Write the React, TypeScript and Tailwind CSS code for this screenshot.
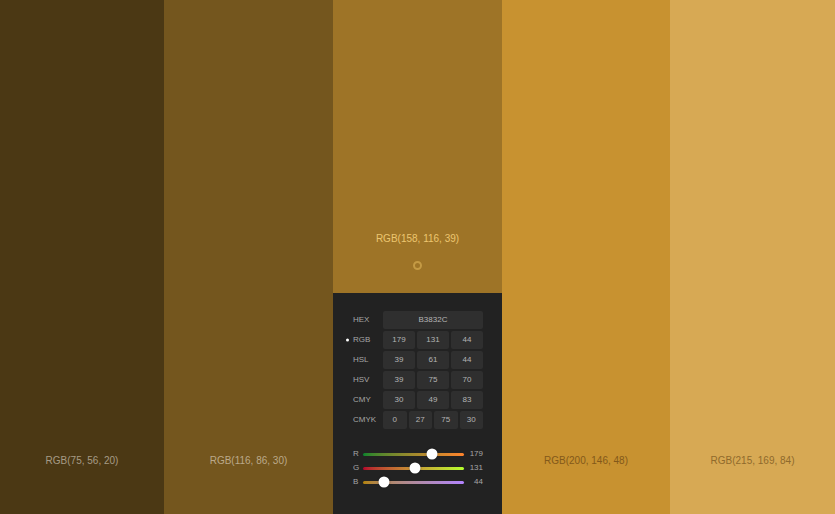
import React from "react";

const font = { fontFamily: '"Liberation Sans", Arial, sans-serif' };

function Swatch({ bg, label, text }: { bg: string; label: string; text: string }) {
  return (
    <div className={`flex h-full flex-col items-center justify-end pb-[47px] ${bg}`}>
      <span className={`text-[10px] leading-[12px] ${text}`}>{label}</span>
    </div>
  );
}

function Cells({ values }: { values: string[] }) {
  const cols = values.length === 1 ? "grid-cols-1" : values.length === 4 ? "grid-cols-4" : "grid-cols-3";
  return (
    <div className={`grid w-[100px] gap-[2px] ${cols}`}>
      {values.map((v, i) => (
        <div
          key={i}
          className="flex h-[18px] items-center justify-center rounded-[2px] bg-[#2f2f2f] text-[8px] text-[#b4b4b4]"
        >
          {v}
        </div>
      ))}
    </div>
  );
}

const rows = [
  { name: "HEX", values: ["B3832C"] },
  { name: "RGB", values: ["179", "131", "44"], active: true },
  { name: "HSL", values: ["39", "61", "44"] },
  { name: "HSV", values: ["39", "75", "70"] },
  { name: "CMY", values: ["30", "49", "83"] },
  { name: "CMYK", values: ["0", "27", "75", "30"] },
];

const sliders = [
  { name: "R", value: 179, track: "bg-gradient-to-r from-[#00832c] to-[#ff832c]" },
  { name: "G", value: 131, track: "bg-gradient-to-r from-[#b3002c] to-[#b3ff2c]" },
  { name: "B", value: 44, track: "bg-gradient-to-r from-[#b38300] to-[#b383ff]" },
];

function Picker() {
  return (
    <div className="flex h-[221px] flex-col bg-[#222222] pl-[20px] pr-[19px] pt-[18px]">
      <div className="flex flex-col gap-[2px]">
        {rows.map((r) => (
          <div key={r.name} className="flex items-center">
            <div className="relative w-[30px] text-[8px] text-[#a6a6a6]">
              {r.active && (
                <span className="absolute left-[-7px] top-1/2 h-[3px] w-[3px] -translate-y-1/2 rounded-full bg-white" />
              )}
              {r.name}
            </div>
            <Cells values={r.values} />
          </div>
        ))}
      </div>
      <div className="mt-[18px] flex flex-col">
        {sliders.map((s) => (
          <div key={s.name} className="flex h-[14px] items-center">
            <span className="w-[10px] text-[8px] text-[#a6a6a6]">{s.name}</span>
            <div className={`relative h-[3px] w-[101px] rounded-full ${s.track}`}>
              <span
                className="absolute top-1/2 h-[11px] w-[11px] -translate-x-1/2 -translate-y-1/2 rounded-full bg-white shadow-[0_0_2px_rgba(0,0,0,0.5)]"
                style={{ left: `${5 + (s.value / 255) * 91}px` }}
              />
            </div>
            <span className="flex-1 text-right text-[8px] text-[#a6a6a6]">{s.value}</span>
          </div>
        ))}
      </div>
    </div>
  );
}

export default function App() {
  return (
    <div className="flex h-[514px] w-[835px] overflow-hidden" style={font}>
      <div className="w-[164px]">
        <Swatch bg="bg-[#4b3814]" label="RGB(75, 56, 20)" text="text-[#a69b86]" />
      </div>
      <div className="w-[169px]">
        <Swatch bg="bg-[#74561e]" label="RGB(116, 86, 30)" text="text-[#bba98a]" />
      </div>
      <div className="flex w-[169px] flex-col">
        <div className="flex flex-1 flex-col items-center justify-end bg-[#9e7427] pb-[23px]">
          <span className="text-[10px] leading-[12px] text-[#ecc670]">RGB(158, 116, 39)</span>
          <span className="mt-[16px] h-[9px] w-[9px] rounded-full border-2 border-[#c49a44]" />
        </div>
        <Picker />
      </div>
      <div className="w-[168px]">
        <Swatch bg="bg-[#c89230]" label="RGB(200, 146, 48)" text="text-[#83591a]" />
      </div>
      <div className="w-[165px]">
        <Swatch bg="bg-[#d7a954]" label="RGB(215, 169, 84)" text="text-[#8f6a2c]" />
      </div>
    </div>
  );
}
